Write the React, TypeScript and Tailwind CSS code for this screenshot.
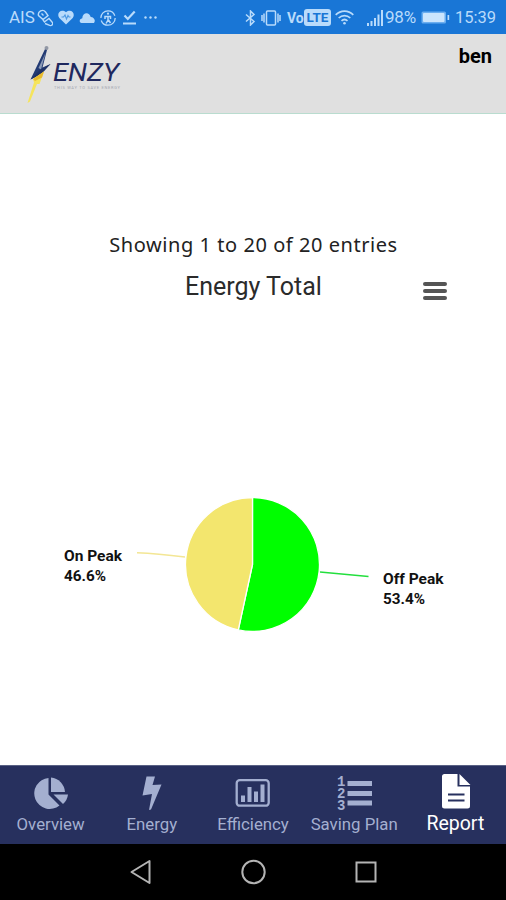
import React from 'react';

const StatusBar: React.FC = () => {
    return (
        <div className="flex h-[34px] shrink-0 items-center bg-[#1976d6] pt-px text-[#b9dbfb]">
            <span className="ml-[9px] w-[27px] text-[17px] leading-none">AIS</span>
            <svg className="ml-[1px] h-[18px] w-4" viewBox="0 0 16 18" fill="none" stroke="currentColor" strokeWidth="1.4">
                <path d="M1.500 6.500a4 4 0 0 1 7-3.500l2.500 3.500-5 4Z" />
                <path d="m4.500 4.500 2 2M6 11l2 2.500M8 12.500l4-3 3 3.500a2 2 0 0 1-3 3l-4-1.500" />
            </svg>
            <svg className="ml-[5px] h-[15px] w-4" viewBox="0 0 16 15">
                <path fill="currentColor" d="M8 14.500 1.300 8C-2 3.500 3-2 8 2.200 13-2 18 3.500 14.700 8Z" />
                <path d="M3.500 7h2l1.500-2L8.500 9 10 5.500l1 1.500h1.500" fill="none" stroke="#4c98e2" strokeWidth="1.100" />
            </svg>
            <svg className="ml-[5px] h-[11px] w-4" viewBox="0 0 16 11" fill="currentColor">
                <path d="M2.500 11C0 10.500 0 7 3.300 6.300 3.500 0 10.500-.5 11.700 5 15 5 17 8.500 15 11Z" />
            </svg>
            <svg className="ml-[5px] h-4 w-4" viewBox="0 0 16 16" fill="none" stroke="currentColor" strokeWidth="1.300">
                <circle cx="8" cy="8" r="7.200" strokeDasharray="20 2.600" />
                <circle cx="8" cy="3.700" r="1.100" fill="currentColor" stroke="none" />
                <path d="M5 9V6.500h5.500V9M8 6v4l-2 3.500M8.500 10l2 3" strokeWidth="1.500" />
            </svg>
            <svg className="ml-[7px] h-[15px] w-[13px]" viewBox="0 0 13 15" fill="none" stroke="currentColor" strokeWidth="2.200">
                <path d="m1.500 5.500 3.300 3.500L11.700 1.500M0 13.500h13" />
            </svg>
            <svg className="ml-2 h-[3px] w-[13px]" viewBox="0 0 13 3" fill="currentColor">
                <circle cx="1.500" cy="1.500" r="1.200" />
                <circle cx="6.500" cy="1.500" r="1.200" />
                <circle cx="11.500" cy="1.500" r="1.200" />
            </svg>

            <div className="ml-auto flex items-center pr-[10px]">
                <svg className="h-4 w-[11px]" viewBox="0 0 11 16" fill="none" stroke="currentColor" strokeWidth="1.500">
                    <path d="m1 4.500 8 7-3.500 3.500V1L9 4.500l-8 7" />
                </svg>
                <svg className="ml-[5px] h-4 w-5" viewBox="0 0 20 16" fill="none" stroke="currentColor" strokeWidth="1.500">
                    <rect x="5.500" y="1" width="9" height="14" rx="1" />
                    <path d="M3 3.500v9M17 3.500v9M1 5v6M19 5v6" />
                </svg>
                <span className="ml-[6px] w-[17px] text-[14px] font-bold leading-none">Vo</span>
                <span className="flex h-[17px] w-[27px] items-center justify-center rounded-[3px] bg-[#b9dbfb] text-[13.500px] font-bold leading-none text-[#1976d6]">LTE</span>
                <svg className="ml-[4px] h-[15px] w-[19px]" viewBox="0 0 19 15" fill="none" stroke="currentColor" strokeWidth="1.700">
                    <path d="M.7 4.800c5-5 12.600-5 17.600 0M3.700 8c3.400-3.300 8.200-3.300 11.600 0M6.500 10.900c1.800-1.700 4.200-1.700 6 0" />
                    <circle cx="9.500" cy="13.300" r="1.300" fill="currentColor" stroke="none" />
                </svg>
                <svg className="ml-[13px] h-4 w-4" viewBox="0 0 16 16" fill="currentColor">
                    <path d="M0 13h2v3H0zM3.500 11h2v5h-2zM7 8h2v8H7zM10.500 4.500h2V16h-2zM14 0h2v16h-2z" />
                </svg>
                <span className="ml-[2px] w-[34px] text-[17px] leading-none tracking-[-0.2px]">98%</span>
                <svg className="ml-[2px] h-[13px] w-[29px]" viewBox="0 0 29 13">
                    <rect x=".5" y=".5" width="24.500" height="12" rx="1.500" fill="#6baef0" />
                    <rect x="2" y="2" width="21.500" height="9" rx="1" fill="#cbe5fd" />
                    <path d="M26.500 4h1.700v5h-1.700z" fill="#b9dbfb" />
                </svg>
                <span className="ml-[5px] w-[41px] text-[16.500px] leading-[18px]">15:39</span>
            </div>
        </div>
    );
};

const Header: React.FC = () => {
    return (
        <header className="flex h-20 shrink-0 items-start border-b border-[#b9dccf] bg-[#e0e0e0] pl-[26px] pr-[14px]">
            <svg className="mt-[10px] h-[60px] w-[26px]" viewBox="0 0 26 60">
                <path d="M19.500 4 4.500 35.500 12 32l12.500-12-8 3.500L21.500 4Z" fill="#233b74" />
                <path d="m19.500 9-7 15 2.500 1.500Z" fill="#8b9bb8" />
                <path d="M14.500 25.500 24.500 20 16 29.500 4.500 35.500Z" fill="#1f3266" />
                <circle cx="20.500" cy="4" r="2" fill="#9298a5" />
                <path d="M7 35 18 27.500 13.500 40H11L4 57.500 1.500 59 8 38.500Z" fill="#f5e45c" />
                <path d="M7 35 18 27.500l-2 6-7 3.500Z" fill="#e8ba30" />
            </svg>
            <div className="mt-[24px] ml-px flex flex-col">
                <svg className="h-[26px] w-[68px]" viewBox="0 0 68 26">
                    <text x="0" y="23" fontSize="25" fontStyle="italic" fill="#1f285e" textLength="66" lengthAdjust="spacingAndGlyphs">ENZY</text>
                </svg>
                <svg className="ml-px h-[6px] w-[68px]" viewBox="0 0 68 6">
                    <text x="0" y="5" fontSize="4" fill="#a5a8b3" textLength="66">THIS WAY TO SAVE ENERGY</text>
                </svg>
            </div>
            <span className="mt-[10px] ml-auto text-[20px] font-bold leading-6 text-black">ben</span>
        </header>
    );
};

const PeakChart: React.FC = () => {
    return (
        <svg className="mt-[180px] h-[160px] w-full" viewBox="0 0 506 160">
            <path d="M252.500 79.500V12.500a67 67 0 1 1-14.200 132.480Z" fill="#00fe00" stroke="#fff" strokeWidth="1.300" />
            <path d="M252.500 79.500 238.300 144.980A67 67 0 0 1 252.500 12.500Z" fill="#f3e66e" stroke="#fff" strokeWidth="1.300" />
            <path d="M137 67.800c16 .7 32 2.300 48 4.200" fill="none" stroke="#f3e694" strokeWidth="1.500" />
            <path d="M320 87c16 1.500 32 3 48.500 4.500" fill="none" stroke="#23df3d" strokeWidth="1.500" />
            <g fontSize="15" fontWeight="700" fill="#111">
                <text x="64" y="76" textLength="58" lengthAdjust="spacingAndGlyphs">On Peak</text>
                <text x="64" y="96" textLength="42" lengthAdjust="spacingAndGlyphs">46.6%</text>
                <text x="383" y="99" textLength="60.500" lengthAdjust="spacingAndGlyphs">Off Peak</text>
                <text x="383" y="118.500" textLength="42" lengthAdjust="spacingAndGlyphs">53.4%</text>
            </g>
        </svg>
    );
};

const tabs = [
    {
        label: 'Overview',
        icon: (
            <g fill="currentColor">
                <path d="M15.500 2v16.500L26.500 29.500A15.500 15.500 0 1 1 15.500 2Z" />
                <path d="M18 1.500a15.500 15.500 0 0 1 14 14.500h-14Z" />
                <path d="M20.500 18.500H35a15 15 0 0 1-5 9.500Z" />
            </g>
        ),
    },
    {
        label: 'Energy',
        icon: <path d="M12.500.5h8.500L18.500 9l9-.500L17 33.500l-2 .5 3-16-9.500 1.500Z" fill="currentColor" />,
    },
    {
        label: 'Efficiency',
        icon: (
            <g>
                <rect x="1.700" y="4.200" width="32" height="25.500" rx="3" fill="none" stroke="currentColor" strokeWidth="2.300" />
                <path d="M6 19.500h4v6.500H6zM12.500 11h4v15h-4zM19 15.500h4V26h-4zM25.500 8.500h4V26h-4z" fill="currentColor" />
            </g>
        ),
    },
    {
        label: 'Saving Plan',
        icon: (
            <path d="M10.500 5h24.500v5H10.500zM10.500 15h24.500v5H10.500zM10.500 24.500h24.500v5H10.500z" fill="currentColor" />
        ),
        marks: ['1', '2', '3'],
    },
    {
        label: 'Report',
        icon: (
            <g transform="translate(1 0)">
                <path d="M5.500 0H18.500v12.500H31V32a2.500 2.500 0 0 1-2.500 2.500h-23A2.500 2.500 0 0 1 3 32V2.500A2.500 2.500 0 0 1 5.500 0ZM20.500 0 31.500 11H20.500Z" fill="currentColor" />
                <path d="M9 20.500h16.500M9 26.500h16.500" stroke="#27305e" strokeWidth="2.200" />
            </g>
        ),
        active: true,
    },
];

const TabBar: React.FC = () => {
    return (
        <nav className="grid h-[79px] shrink-0 grid-cols-5 border-t border-[#596184] bg-[#27305e]">
            {tabs.map((tab) => (
                <div
                    key={tab.label}
                    className={
                        tab.active
                            ? 'flex flex-col items-center pt-2 text-[19.500px] text-white'
                            : 'flex flex-col items-center pt-[10px] text-[16.800px] text-[#a4afd0]'
                    }
                >
                    <div className="relative h-[35px] w-[35px] shrink-0">
                        <svg className="h-[35px] w-[35px]" viewBox="0 0 35 35">
                            {tab.icon}
                        </svg>
                        {tab.marks && (
                            <div className="absolute top-0 left-0 flex w-[9px] flex-col text-center font-['Liberation_Mono',monospace] text-[14px] leading-[12px] font-bold">
                                {tab.marks.map((mark) => (
                                    <span key={mark}>{mark}</span>
                                ))}
                            </div>
                        )}
                    </div>
                    <span className={tab.active ? 'mt-[3px] leading-6 whitespace-nowrap' : 'mt-px leading-6 whitespace-nowrap'}>{tab.label}</span>
                </div>
            ))}
        </nav>
    );
};

const SystemNav: React.FC = () => {
    return (
        <div className="flex h-14 shrink-0 items-center justify-center gap-[87px] bg-black text-[#b4b4b4]">
            <svg className="h-[26px] w-[26px]" viewBox="0 0 26 26" fill="none" stroke="currentColor" strokeWidth="2">
                <path d="M4.500 13 22.500 2v22Z" strokeLinejoin="round" />
            </svg>
            <svg className="h-[26px] w-[26px]" viewBox="0 0 26 26" fill="none" stroke="currentColor" strokeWidth="2">
                <circle cx="13.500" cy="13" r="11.200" />
            </svg>
            <svg className="h-[26px] w-[26px]" viewBox="0 0 26 26" fill="none" stroke="currentColor" strokeWidth="2">
                <rect x="3.500" y="3.500" width="19" height="19" />
            </svg>
        </div>
    );
};

export default function App() {
    return (
        <div className="flex h-screen w-full flex-col overflow-hidden bg-white font-['Roboto','Liberation_Sans',sans-serif]">
            <StatusBar />
            <Header />
            <main className="flex flex-1 flex-col">
                <p className="mt-[117px] pl-px text-center font-['Noto_Sans',sans-serif] text-[20px] leading-7 tracking-[0.55px] text-[#222]">
                    Showing 1 to 20 of 20 entries
                </p>
                <div className="mt-[10px] grid h-9 grid-cols-[1fr_140px_1fr] items-center">
                    <h1 className="col-start-2 pl-px text-center text-[25px] leading-8 whitespace-nowrap text-[#2b2b2b]">Energy Total</h1>
                    <button className="ml-[100px] mt-2 flex w-6 flex-col gap-[3px]">
                        <span className="h-1 w-full rounded-sm bg-[#555]" />
                        <span className="h-1 w-full rounded-sm bg-[#555]" />
                        <span className="h-1 w-full rounded-sm bg-[#555]" />
                    </button>
                </div>
                <PeakChart />
            </main>
            <TabBar />
            <SystemNav />
        </div>
    );
}
